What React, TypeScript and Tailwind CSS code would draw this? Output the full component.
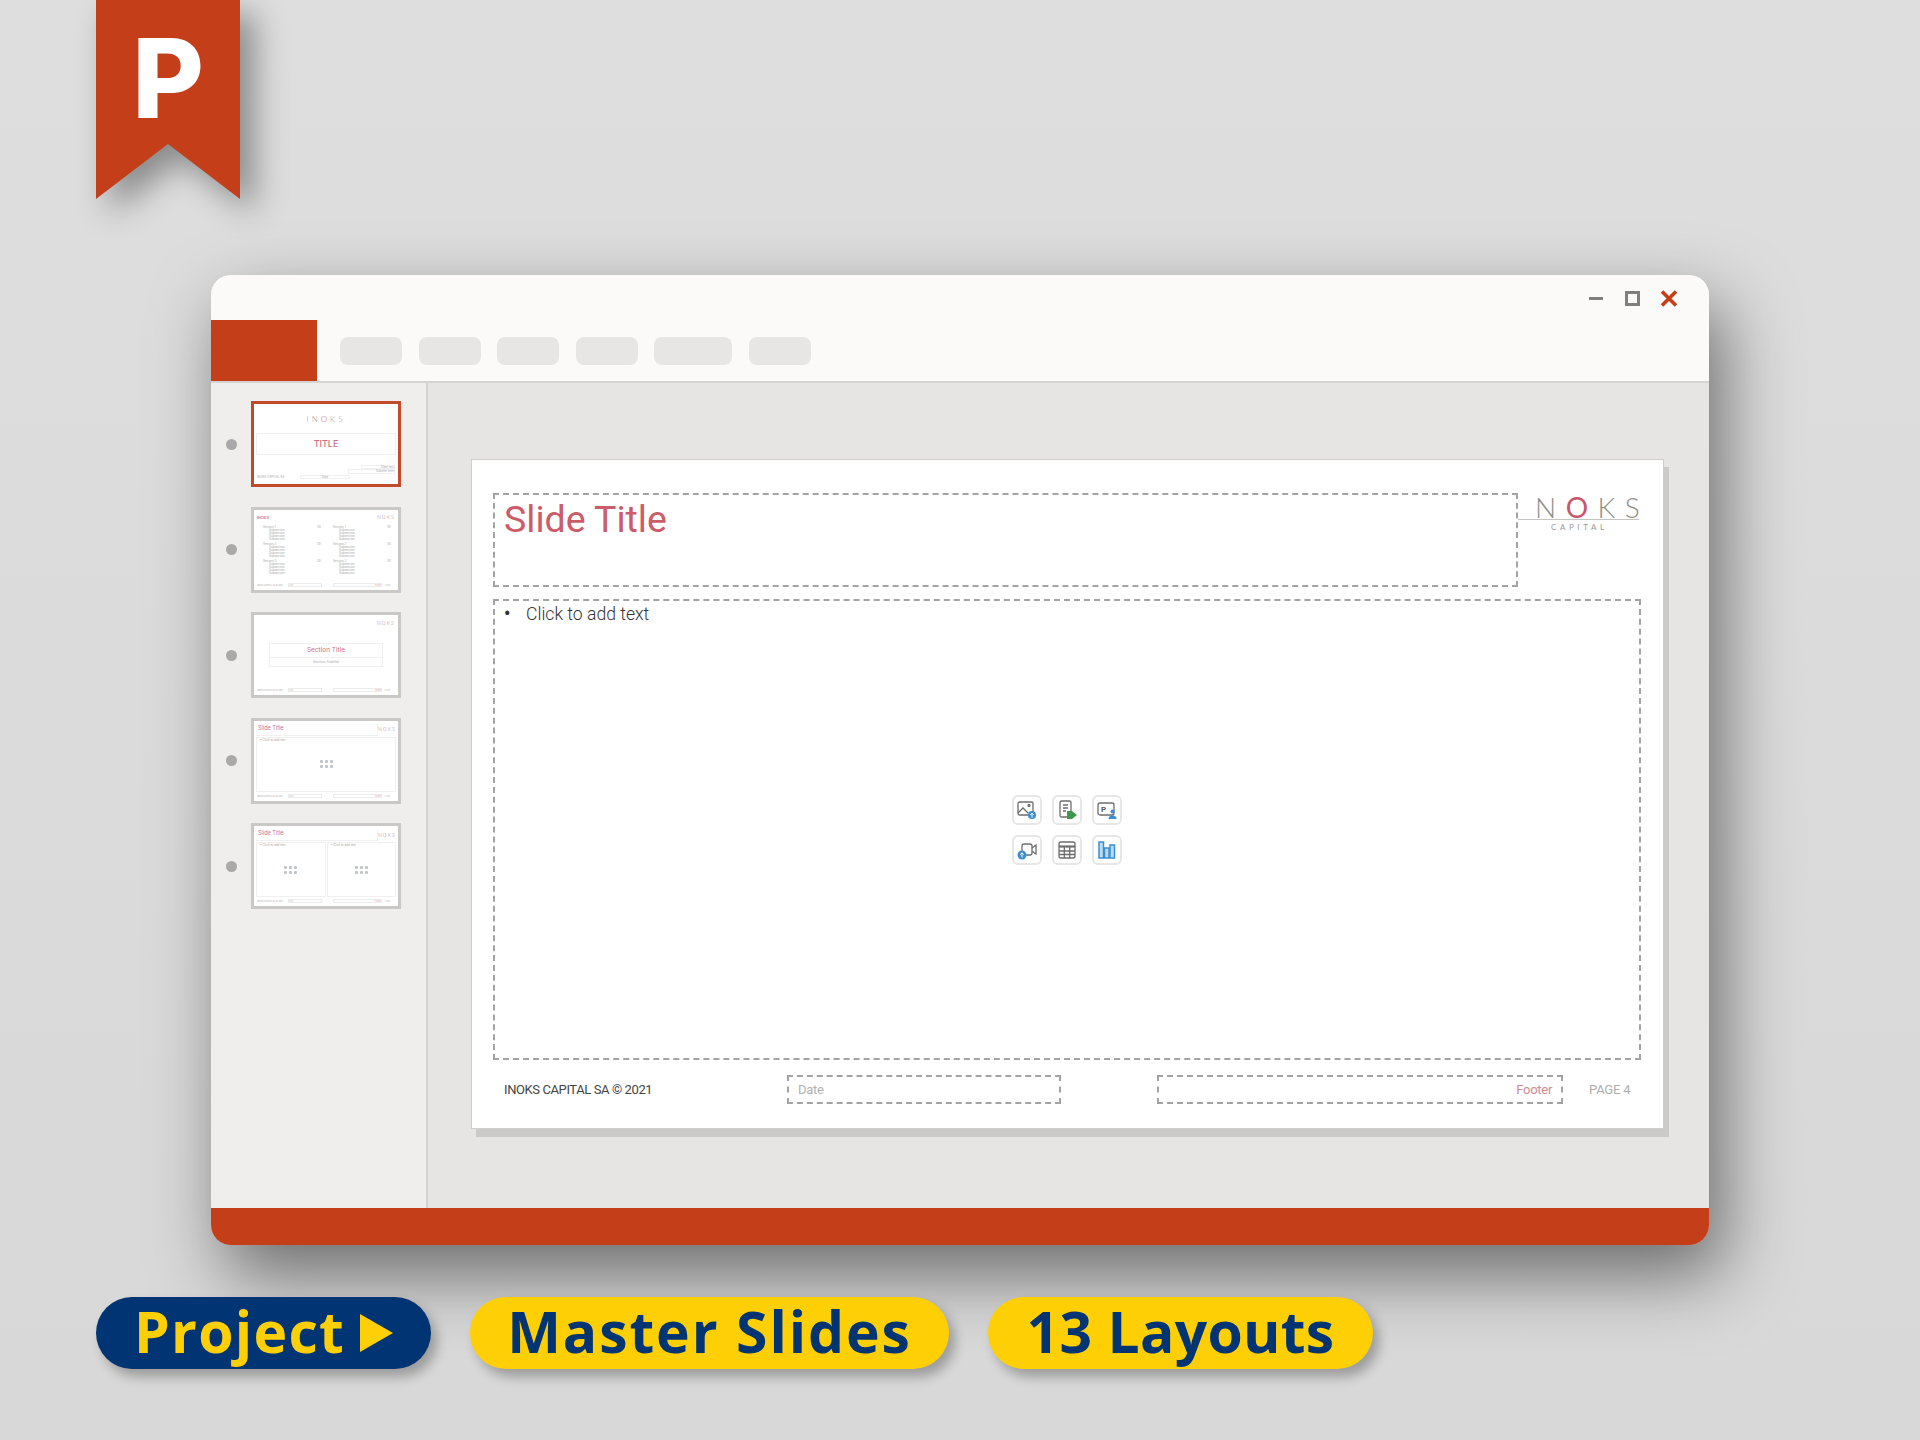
import React from "react";

const dash = "border-2 border-dashed border-[#a3a3a3]";

function Cell({ children }: { children: React.ReactNode }) {
  return (
    <div className="w-[30px] h-[30px] rounded-[6px] border-2 border-[#e8e7e5] bg-white flex items-center justify-center">
      <svg width="22" height="22" viewBox="0 0 22 22" fill="none" strokeWidth="1.3" stroke="#6e6e6e">
        {children}
      </svg>
    </div>
  );
}

function IconGrid() {
  return (
    <div className="grid grid-cols-[30px_30px_30px] gap-x-[10px] gap-y-[10px]">
      <Cell>
        <rect x="2" y="3" width="15" height="13" rx="1.5" />
        <path d="M2 14l5-5 5 5" />
        <circle cx="13" cy="6.5" r="1" />
        <circle cx="16" cy="16" r="4" fill="#3b8fd0" stroke="none" />
        <path d="M16 18.5v-4M14.4 15.8l1.6-1.6 1.6 1.6" stroke="#fff" strokeWidth="1" />
      </Cell>
      <Cell>
        <rect x="4" y="2" width="11" height="16" rx="1.5" />
        <path d="M7 6h5M7 9h5M7 12h3" />
        <path d="M11 12h5l5 4-5 4h-5z" fill="#3a9a4a" stroke="none" />
      </Cell>
      <Cell>
        <rect x="2" y="4" width="16" height="12" rx="2" />
        <text x="5" y="13" fontSize="8" fontWeight="700" fill="#5a5a5a" stroke="none" fontFamily="Roboto, sans-serif">P</text>
        <circle cx="16.5" cy="12.5" r="2" fill="#3b8fd0" stroke="none" />
        <path d="M12.5 20c0-5 8-5 8 0z" fill="#3b8fd0" stroke="none" />
      </Cell>
      <Cell>
        <rect x="6" y="5" width="10" height="11" rx="2" />
        <path d="M16 9l4-3v9l-4-3" />
        <circle cx="6" cy="16" r="4.5" fill="#3b8fd0" stroke="none" />
        <path d="M6 18.5v-4.6M4.2 15.5L6 13.8l1.8 1.7" stroke="#fff" strokeWidth="1" />
      </Cell>
      <Cell>
        <rect x="3" y="3" width="16" height="16" rx="2" />
        <path d="M3 7.5h16" strokeWidth="2.2" />
        <path d="M3 12h16M3 15.5h16M8.3 8v11M13.7 8v11" />
      </Cell>
      <Cell>
        <g stroke="#3b8fd0" strokeWidth="1.5" fill="#bcdcf3">
          <rect x="3" y="3" width="4.5" height="16" />
          <rect x="8.5" y="9" width="4.5" height="10" />
          <rect x="14" y="6" width="4.5" height="13" />
        </g>
      </Cell>
    </div>
  );
}

function MiniFooter() {
  return (
    <div className="flex items-center h-[6px] mt-auto mb-[2px] ml-[3px] text-[3px] leading-none text-[#a5a5a5] whitespace-nowrap">
      <span className="w-[28px] shrink-0 text-[2px]">INOKS CAPITAL SA © 2021</span>
      <span className="w-[34px] h-[4px] border border-[#ececec] ml-[3px] text-[2px] text-[#ccc]">Date</span>
      <span className="w-[49px] h-[4px] border border-[#ececec] ml-[11px] text-right text-[2px] text-[#dba6ad]">Footer</span>
      <span className="ml-[3px] text-[2px] text-[#bbb]">PAGE</span>
    </div>
  );
}

function MiniLogo() {
  return (
    <span className="text-[5px] leading-none font-light tracking-[1px] text-[#b5b5b5]">
      N<span className="text-[#d58a96]">O</span>KS
    </span>
  );
}

function MiniDots() {
  return (
    <div className="grid grid-cols-[3px_3px_3px] gap-x-[2px] gap-y-[2px]">
      {["a", "b", "c", "d", "e", "f"].map((k) => (
        <span key={k} className="w-[3px] h-[3px] rounded-[1px] bg-[#c0c5ca]" />
      ))}
    </div>
  );
}

function Thumb({ active, children }: { active?: boolean; children: React.ReactNode }) {
  return (
    <div className={`w-[150px] h-[86px] bg-white border-[3px] flex flex-col overflow-hidden ${active ? "border-[#c2492a]" : "border-[#c9c8c6]"}`}>
      {children}
    </div>
  );
}

function IndexCol() {
  return (
    <div className="w-[58px] flex flex-col text-[3px] leading-[3px] text-[#a8a8a8]">
      {["1", "2", "3"].map((s) => (
        <div key={s} className="flex flex-col mb-[2px]">
          <div className="flex justify-between"><span>Section {s}</span><span>00</span></div>
          {["a", "b", "c", "d"].map((k) => (
            <span key={k} className="pl-[6px]">Subsection</span>
          ))}
        </div>
      ))}
    </div>
  );
}

function Dot() {
  return <span className="w-[11px] h-[11px] rounded-full bg-[#a9a9a9] ml-[15px] mr-[14px]" />;
}

function Thumbs() {
  return (
    <div className="flex flex-col gap-[19.6px]">
      <div className="flex items-center">
        <Dot />
        <Thumb active>
          <div className="flex justify-center mt-[10px]">
            <span className="text-[8px] leading-[11px] tracking-[3px] font-light text-[#999]" style={{ fontFamily: "Lato, sans-serif" }}>
              IN<span className="text-[#c9566a]">O</span>KS
            </span>
          </div>
          <div className="mx-[2px] mt-[8px] h-[22px] border border-[#f0f0f0] flex items-center justify-center text-[9px] font-medium text-[#cf6f7e]">TITLE</div>
          <div className="flex flex-col items-end text-[3px] leading-[4px] text-[#a8a8a8] mr-[3px] mt-[10px] whitespace-nowrap">
            <span className="w-[34px] border border-[#f0f0f0] h-[4px] text-right leading-[2px]">Date text</span>
            <span className="w-[47px] border border-[#f0f0f0] h-[5px] text-right leading-[3px]">Subtitle here</span>
          </div>
          <div className="flex items-center ml-[3px] mt-[1px] text-[3px] leading-[4px] text-[#a8a8a8] whitespace-nowrap">
            <span className="w-[43px]">INOKS CAPITAL SA</span>
            <span className="w-[50px] h-[4px] border border-[#f0f0f0] text-center leading-[2px]">Date</span>
          </div>
        </Thumb>
      </div>
      <div className="flex items-center">
        <Dot />
        <Thumb>
          <div className="flex justify-between items-center mt-[3px] mx-[3px] h-[10px]">
            <span className="text-[4px] leading-none font-bold text-[#d58a96]">INDEX</span>
            <MiniLogo />
          </div>
          <div className="flex gap-[12px] ml-[9px] mt-[3px]">
            <IndexCol />
            <IndexCol />
          </div>
          <MiniFooter />
        </Thumb>
      </div>
      <div className="flex items-center">
        <Dot />
        <Thumb>
          <div className="flex justify-end items-center mt-[3px] mx-[3px] h-[10px]"><MiniLogo /></div>
          <div className="mx-[15px] mt-[15px] h-[15px] border border-[#f0f0f0] flex items-center justify-center text-[6.5px] text-[#d0707f]">Section Title</div>
          <div className="mx-[15px] h-[9px] border border-t-0 border-[#f0f0f0] flex items-center justify-center text-[3.5px] text-[#a8a8a8]">Section Subtitle</div>
          <MiniFooter />
        </Thumb>
      </div>
      <div className="flex items-center">
        <Dot />
        <Thumb>
          <div className="flex items-center justify-between mt-[3px] mx-[2px]">
            <span className="w-[123px] h-[12px] border-r border-b border-[#f0f0f0] text-[5.5px] leading-[9px] text-[#d0707f] pl-[2px]">Slide Title</span>
            <MiniLogo />
          </div>
          <div className="mx-[2px] mt-[1px] h-[55px] border border-[#f0f0f0] grid">
            <span className="[grid-area:1/1] text-[3px] leading-[5px] text-[#a5a5a5] pl-[3px]">• Click to add text</span>
            <div className="[grid-area:1/1] self-center justify-self-center"><MiniDots /></div>
          </div>
          <MiniFooter />
        </Thumb>
      </div>
      <div className="flex items-center">
        <Dot />
        <Thumb>
          <div className="flex items-center justify-between mt-[3px] mx-[2px]">
            <span className="w-[123px] h-[12px] border-r border-b border-[#f0f0f0] text-[5.5px] leading-[9px] text-[#d0707f] pl-[2px]">Slide Title</span>
            <MiniLogo />
          </div>
          <div className="mx-[2px] mt-[1px] h-[55px] flex gap-[1px]">
            <div className="flex-1 border border-[#f0f0f0] grid">
              <span className="[grid-area:1/1] text-[3px] leading-[5px] text-[#a5a5a5] pl-[3px]">• Click to add text</span>
              <div className="[grid-area:1/1] self-center justify-self-center"><MiniDots /></div>
            </div>
            <div className="flex-1 border border-[#f0f0f0] grid">
              <span className="[grid-area:1/1] text-[3px] leading-[5px] text-[#a5a5a5] pl-[3px]">• Click to add text</span>
              <div className="[grid-area:1/1] self-center justify-self-center"><MiniDots /></div>
            </div>
          </div>
          <MiniFooter />
        </Thumb>
      </div>
    </div>
  );
}

function Slide() {
  return (
    <div className="w-[1193px] h-[670px] bg-white border border-[#cfcecc] shadow-[5px_8px_0_#cbcac8] pl-[21px] pt-[33px] flex flex-col" style={{ fontFamily: "Roboto, sans-serif" }}>
      <div className="flex">
        <div className={`w-[1025px] h-[94px] ${dash} pl-[9px]`}>
          <span className="block text-[37.5px] leading-[46px] mt-[1px] text-[#cb5c69]">Slide Title</span>
        </div>
        <div className="w-[121px] pt-[1px] flex flex-col" style={{ fontFamily: "Lato, sans-serif" }}>
          <div className="h-[26px] pl-[17px] text-[28px] leading-[26px] font-light text-[#8f8f88] tracking-[9.5px] whitespace-nowrap border-b border-[#c4c4c0]">
            N<span className="font-normal text-[#c9566a]">O</span>KS
          </div>
          <span className="text-[8px] leading-[10px] mt-[2px] pl-[33px] tracking-[3.6px] text-[#9a9a96]">CAPITAL</span>
        </div>
      </div>
      <div className={`w-[1148px] h-[461px] mt-[12px] ${dash} grid`}>
        <div className="[grid-area:1/1] flex items-start pl-[9px] pt-[3px] text-[17.6px] leading-[20px] font-light text-[#333]">
          <span className="w-[22px] font-bold">•</span>
          <span>Click to add text</span>
        </div>
        <div className="[grid-area:1/1] self-center justify-self-center">
          <IconGrid />
        </div>
      </div>
      <div className="flex items-center mt-[15px] h-[29px] text-[13px]">
        <span className="w-[294px] pl-[11px] text-[#444] tracking-[-0.4px]">INOKS CAPITAL SA © 2021</span>
        <div className={`w-[274px] h-[29px] ${dash} pl-[9px] flex items-center text-[#b0b0b0] tracking-[-0.3px]`}>Date</div>
        <div className={`w-[406px] h-[29px] ml-[96px] ${dash} pr-[9px] flex items-center justify-end text-[#d08a94] tracking-[-0.3px]`}>Footer</div>
        <span className="ml-[26px] text-[#adadad] tracking-[-0.2px]">PAGE 4</span>
      </div>
    </div>
  );
}

function Pill({ w, dark, children }: { w: string; dark?: boolean; children: React.ReactNode }) {
  return (
    <div className={`${w} h-[72px] pb-[3px] rounded-full flex items-center justify-center text-[57px] leading-none font-bold shadow-[6px_8px_12px_rgba(0,0,0,0.28)] ${dark ? "bg-[#003473] text-[#ffcf06]" : "bg-[#ffcf06] text-[#003473]"}`} style={{ fontFamily: "'Open Sans', sans-serif" }}>
      {children}
    </div>
  );
}

export default function App() {
  return (
    <div className="w-[1920px] h-[1440px] bg-gradient-to-b from-[#dedede] to-[#d8d8d8] overflow-hidden flex flex-col" style={{ fontFamily: "Inter, sans-serif" }}>
      <div className="ml-[96px] w-[144px] h-[199px] drop-shadow-[14px_14px_16px_rgba(0,0,0,0.38)]">
        <div className="w-full h-full bg-[#c43e1a] [clip-path:polygon(0_0,100%_0,100%_100%,50%_72.4%,0_100%)] flex justify-center pt-[18px]">
          <span className="text-[110px] leading-[120px] font-extrabold text-white">P</span>
        </div>
      </div>

      <div className="ml-[211px] mt-[76px] w-[1498px] h-[970px] rounded-[20px] overflow-hidden flex flex-col bg-[#e6e5e3] shadow-[14px_30px_70px_rgba(0,0,0,0.5)]">
        <div className="h-[106px] bg-[#fbfaf8] flex flex-col shrink-0">
          <div className="h-[45px] flex items-start justify-end">
            <div className="flex items-center mt-[15px] mr-[31px]">
              <span className="w-[14px] h-[3px] bg-[#7f7f7f] mr-[22px]" />
              <span className="w-[15px] h-[15px] border-[3px] border-[#7f7f7f] mr-[20px]" />
              <svg width="18" height="17" viewBox="0 0 18 17">
                <path d="M2 1.5l14 14M16 1.5l-14 14" stroke="#c43e1a" strokeWidth="3.6" />
              </svg>
            </div>
          </div>
          <div className="h-[61px] flex items-center">
            <div className="w-[106px] h-[61px] bg-[#c43e1a]" />
            <div className="flex gap-[16.6px] ml-[23px]">
              <span className="w-[62px] h-[28px] rounded-[8px] bg-[#e7e6e4]" />
              <span className="w-[62px] h-[28px] rounded-[8px] bg-[#e7e6e4]" />
              <span className="w-[62px] h-[28px] rounded-[8px] bg-[#e7e6e4]" />
              <span className="w-[62px] h-[28px] rounded-[8px] bg-[#e7e6e4]" />
              <span className="w-[78px] h-[28px] rounded-[8px] bg-[#e7e6e4]" />
              <span className="w-[62px] h-[28px] rounded-[8px] bg-[#e7e6e4]" />
            </div>
          </div>
        </div>
        <div className="flex h-[827px] border-t-2 border-[#d5d4d2]">
          <div className="w-[217px] bg-[#efeeec] border-r-2 border-[#d5d4d2] pt-[18px] shrink-0">
            <Thumbs />
          </div>
          <div className="pl-[43px] pt-[76px]">
            <Slide />
          </div>
        </div>
        <div className="h-[37px] bg-[#c43e1a] shrink-0" />
      </div>

      <div className="flex gap-[39px] ml-[96px] mt-[52px]">
        <Pill w="w-[335px]" dark>
          <span className="tracking-[1.3px]">Project</span>
          <svg width="33" height="38" viewBox="0 0 33 38" className="ml-[15px] mt-[3px]"><polygon points="0,0 33,19 0,38" fill="#ffcf06" /></svg>
        </Pill>
        <Pill w="w-[479px]"><span className="tracking-[1.9px]">Master Slides</span></Pill>
        <Pill w="w-[385px]"><span className="tracking-[0.3px]">13 Layouts</span></Pill>
      </div>
    </div>
  );
}
